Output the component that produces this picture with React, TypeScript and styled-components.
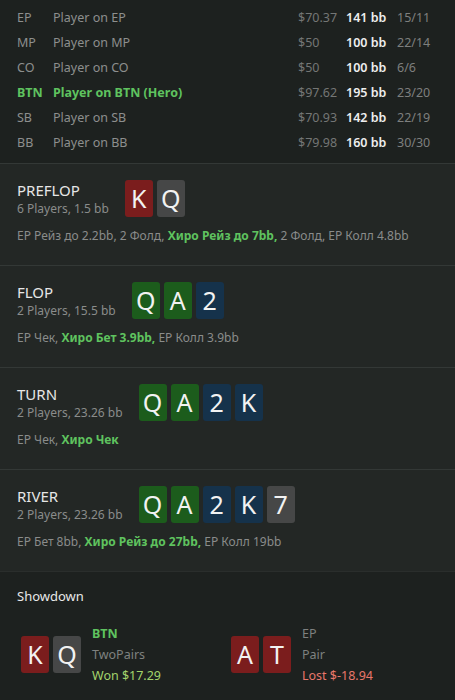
import React from 'react';
import styled, { createGlobalStyle } from 'styled-components';

const GlobalStyle = createGlobalStyle`
  html, body {
    margin: 0;
    padding: 0;
    background: #1d211f;
  }
  body {
    font-family: "Noto Sans", "Open Sans", sans-serif;
    font-size: 12px;
    color: #8d8f8e;
  }
`;

type Suit = 'red' | 'grey' | 'green' | 'blue';

interface CardData {
  rank: string;
  suit: Suit;
}

const suitColors: Record<Suit, string> = {
  red: '#7b1d1d',
  grey: '#464747',
  green: '#1c5c1c',
  blue: '#15324b',
};

const Page = styled.div`
  width: 455px;
  height: 700px;
  overflow: hidden;
  background: #1d211f;
`;

const PlayersTable = styled.div`
  padding: 5px 16px 8px 17px;
`;

const PlayerRow = styled.div<{ $hero?: boolean }>`
  display: grid;
  grid-template-columns: 36px 1fr 48px 51px 42px;
  height: 25px;
  align-items: center;
  white-space: nowrap;
  font-size: 12.5px;
  color: ${(p) => (p.$hero ? '#5fc35f' : '#8d8f8e')};
  font-weight: ${(p) => (p.$hero ? 700 : 400)};
`;

const Stack = styled.span`
  color: #747675;
  font-weight: 400;
`;

const BigBlinds = styled.span`
  color: #eeeeee;
  font-weight: 600;
`;

const Stats = styled.span`
  color: #7d7f7e;
  font-weight: 400;
`;

const Street = styled.section`
  background: #232725;
  border-top: 1px solid #333836;
  padding: 16px 17px 20px;
`;

const StreetHeader = styled.div`
  display: flex;
  align-items: center;
  gap: 16px;
  height: 37px;
`;

const StreetInfo = styled.div`
  display: flex;
  flex-direction: column;
`;

const StreetTitle = styled.div`
  color: #e6e6e6;
  font-size: 15px;
  line-height: 20px;
`;

const StreetSub = styled.div`
  color: #8a8c8b;
  font-size: 12px;
  line-height: 18px;
  white-space: nowrap;
`;

const Actions = styled.div`
  margin-top: 10px;
  line-height: 18px;
  white-space: nowrap;
  color: #8a8c8b;
`;

const HeroAction = styled.span`
  color: #5fc35f;
  font-weight: 700;
`;

const Cards = styled.div`
  display: flex;
  gap: 4px;
`;

const Card = styled.div<{ $suit: Suit }>`
  width: 28px;
  height: 37px;
  border-radius: 3px;
  background: ${(p) => suitColors[p.$suit]};
  color: #f2f2f2;
  font-size: 25px;
  line-height: 37px;
  text-align: center;
`;

const Showdown = styled.section`
  border-top: 1px solid #2a2e2c;
  padding: 14px 17px 20px;
`;

const ShowdownTitle = styled.div`
  color: #e8e8e8;
  font-size: 13px;
  line-height: 20px;
`;

const ShowdownPlayers = styled.div`
  display: grid;
  grid-template-columns: 210px 1fr;
  padding-left: 4px;
  margin-top: 17px;
`;

const ShowdownPlayer = styled.div`
  display: flex;
  align-items: center;
  gap: 11px;
`;

const ShowdownInfo = styled.div`
  display: flex;
  flex-direction: column;
  line-height: 21px;
  font-size: 12.5px;
`;

const Position = styled.span<{ $hero?: boolean }>`
  color: ${(p) => (p.$hero ? '#5fc35f' : '#7f8180')};
  font-weight: ${(p) => (p.$hero ? 700 : 400)};
`;

const HandName = styled.span`
  color: #7f8180;
`;

const Result = styled.span<{ $won: boolean }>`
  color: ${(p) => (p.$won ? '#a3d46c' : '#e8776b')};
`;

const players = [
  { pos: 'EP', name: 'Player on EP', stack: '$70.37', bb: '141 bb', stats: '15/11' },
  { pos: 'MP', name: 'Player on MP', stack: '$50', bb: '100 bb', stats: '22/14' },
  { pos: 'CO', name: 'Player on CO', stack: '$50', bb: '100 bb', stats: '6/6' },
  { pos: 'BTN', name: 'Player on BTN (Hero)', stack: '$97.62', bb: '195 bb', stats: '23/20', hero: true },
  { pos: 'SB', name: 'Player on SB', stack: '$70.93', bb: '142 bb', stats: '22/19' },
  { pos: 'BB', name: 'Player on BB', stack: '$79.98', bb: '160 bb', stats: '30/30' },
];

const board: CardData[] = [
  { rank: 'Q', suit: 'green' },
  { rank: 'A', suit: 'green' },
  { rank: '2', suit: 'blue' },
  { rank: 'K', suit: 'blue' },
  { rank: '7', suit: 'grey' },
];

const streets = [
  {
    name: 'PREFLOP',
    sub: '6 Players, 1.5 bb',
    cards: [{ rank: 'K', suit: 'red' }, { rank: 'Q', suit: 'grey' }] as CardData[],
    before: 'EP Рейз до 2.2bb, 2 Фолд, ',
    hero: 'Хиро Рейз до 7bb,',
    after: ' 2 Фолд, EP Колл 4.8bb',
  },
  {
    name: 'FLOP',
    sub: '2 Players, 15.5 bb',
    cards: board.slice(0, 3),
    before: 'EP Чек, ',
    hero: 'Хиро Бет 3.9bb,',
    after: ' EP Колл 3.9bb',
  },
  {
    name: 'TURN',
    sub: '2 Players, 23.26 bb',
    cards: board.slice(0, 4),
    before: 'EP Чек, ',
    hero: 'Хиро Чек',
    after: '',
  },
  {
    name: 'RIVER',
    sub: '2 Players, 23.26 bb',
    cards: board,
    before: 'EP Бет 8bb, ',
    hero: 'Хиро Рейз до 27bb,',
    after: ' EP Колл 19bb',
  },
];

const showdown = [
  {
    pos: 'BTN',
    hand: 'TwoPairs',
    result: 'Won $17.29',
    won: true,
    cards: [{ rank: 'K', suit: 'red' }, { rank: 'Q', suit: 'grey' }] as CardData[],
  },
  {
    pos: 'EP',
    hand: 'Pair',
    result: 'Lost $-18.94',
    won: false,
    cards: [{ rank: 'A', suit: 'red' }, { rank: 'T', suit: 'red' }] as CardData[],
  },
];

const CardRow: React.FC<{ cards: CardData[] }> = ({ cards }) => (
  <Cards>
    {cards.map((c, i) => (
      <Card key={i} $suit={c.suit}>{c.rank}</Card>
    ))}
  </Cards>
);

export default function App() {
  return (
    <Page>
      <GlobalStyle />
      <PlayersTable>
        {players.map((p) => (
          <PlayerRow key={p.pos} $hero={p.hero}>
            <span>{p.pos}</span>
            <span>{p.name}</span>
            <Stack>{p.stack}</Stack>
            <BigBlinds>{p.bb}</BigBlinds>
            <Stats>{p.stats}</Stats>
          </PlayerRow>
        ))}
      </PlayersTable>

      {streets.map((s) => (
        <Street key={s.name}>
          <StreetHeader>
            <StreetInfo>
              <StreetTitle>{s.name}</StreetTitle>
              <StreetSub>{s.sub}</StreetSub>
            </StreetInfo>
            <CardRow cards={s.cards} />
          </StreetHeader>
          <Actions>
            {s.before}
            <HeroAction>{s.hero}</HeroAction>
            {s.after}
          </Actions>
        </Street>
      ))}

      <Showdown>
        <ShowdownTitle>Showdown</ShowdownTitle>
        <ShowdownPlayers>
          {showdown.map((p) => (
            <ShowdownPlayer key={p.pos}>
              <CardRow cards={p.cards} />
              <ShowdownInfo>
                <Position $hero={p.won}>{p.pos}</Position>
                <HandName>{p.hand}</HandName>
                <Result $won={p.won}>{p.result}</Result>
              </ShowdownInfo>
            </ShowdownPlayer>
          ))}
        </ShowdownPlayers>
      </Showdown>
    </Page>
  );
}
